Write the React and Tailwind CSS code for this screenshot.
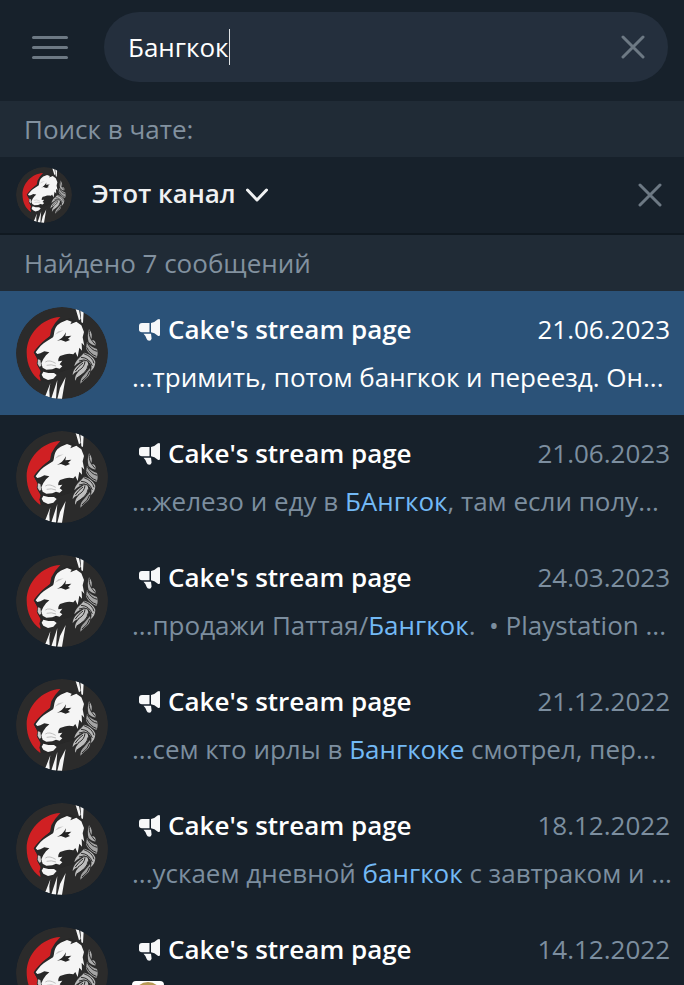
import React from "react";

const messages = [
  { date: "21.06.2023", before: "...тримить, потом бангкок и переезд. Он...", selected: true },
  { date: "21.06.2023", before: "...железо и еду в ", match: "БАнгкок", after: ", там если полу..." },
  { date: "24.03.2023", before: "...продажи Паттая/", match: "Бангкок", after: ".  • Playstation ..." },
  { date: "21.12.2022", before: "...сем кто ирлы в ", match: "Бангкоке", after: " смотрел, пер..." },
  { date: "18.12.2022", before: "...ускаем дневной ", match: "бангкок", after: " с завтраком и ..." },
  { date: "14.12.2022", emoji: true },
];

function LionAvatar({ className }) {
  return (
    <svg viewBox="18 21 276 276" className={`shrink-0 rounded-full ${className}`} aria-hidden="true">
      <circle cx="156" cy="159" r="138" fill="#2b2b2b" />
      <path d="M151 51C96 54 50 103 50 157C50 194 65 226 91 243L92 212L82 196L84 182L73 158L98 128L120 108L124 88L136 68Z" fill="#d02023" />
      <path d="M141 66C130 76 126 91 125 105L107 118C93 129 80 143 71 157L76 166L84 177L80 190L87 203L92 214L88 227L94 243L122 244L145 218L190 205L216 130L219 75L180 54Z" fill="#282828" />
      <path d="M77 157C86 143 98 131 110 124L129 112C134 104 130 90 142 76L152 68L171 60L185 65L181 73L199 65L214 76L222 96L218 112L223 137L215 128L216 152L208 143L203 171L196 156L190 163C176 158 164 163 150 168C146 173 144 178 145 184L157 182L149 193L157 199L149 206L138 203L127 208L109 209L98 203L94 190L100 177L108 166L118 157L103 154L91 160L82 162Z" fill="#f5f5f5" />
      <path d="M141 122C152 119 161 110 168 97L166 109L184 107L174 116L180 120L167 125L153 120Z" fill="#242424" />
      <path d="M134 104L145 94L161 91L147 98Z" fill="#c9c9c9" />
      <path d="M106 186Q118 178 137 190M110 196Q124 192 138 198" fill="none" stroke="#b5b5b5" strokeWidth="2.500" />
      <path d="M100 215L115 219L132 219L140 225L130 236L114 240L100 233L95 224Z" fill="#f5f5f5" />
      <path d="M84 178L91 180L94 198L88 200L83 191Z" fill="#c9c9c9" />
      <path d="M197 27L207 29L212 57L207 61ZM211 29L221 34L219 69L214 67Z" fill="#f5f5f5" />
      <path d="M121 250L118 271L119 292L106 288ZM142 240L138 296L124 295ZM167 231L156 296L142 296L150 264Z" fill="#f5f5f5" />
      <path d="M237 88C246 98 248 110 243 120C254 118 258 126 257 136C248 137 242 132 236 126C232 113 233 101 237 88Z" fill="#adadad" />
      <path d="M231 125C238 137 251 143 261 147C264 157 264 166 259 174C247 169 232 158 228 145Z" fill="#a3a3a3" />
      <path d="M223 158C239 163 253 173 256 186C256 198 250 208 242 214C249 198 241 185 226 181C215 181 202 190 193 199C195 182 211 171 223 158Z" fill="#b8b8b8" />
      <path d="M229 180C239 191 235 206 224 217C212 226 201 232 195 242C194 229 200 220 207 213C198 214 192 219 188 226C188 207 207 190 229 180Z" fill="#bdbdbd" />
      <path d="M240 204C243 219 238 229 226 237C220 242 215 247 211 251C210 240 215 231 223 224Z" fill="#9c9c9c" />
      <path d="M238 91C236 108 243 120 256 134M232 128Q243 151 262 154M230 142Q240 163 259 169M222 161Q247 170 252 190M213 172Q238 173 247 198M207 183Q222 176 236 184M225 184Q224 202 204 213M219 189Q207 197 196 213M234 196Q232 217 199 235M239 213Q235 230 216 243" fill="none" stroke="#2b2b2b" strokeWidth="3" />
    </svg>
  );
}

function CloseIcon() {
  return (
    <svg width="24" height="24" viewBox="0 0 24 24" fill="none" stroke="#6d7984" strokeWidth="3" strokeLinecap="round" aria-hidden="true">
      <path d="M2 2L22 22M22 2L2 22" />
    </svg>
  );
}

function ChannelIcon() {
  return (
    <svg width="24" height="24" viewBox="0 0 24 24" fill="#f7f8f9" className="shrink-0" aria-hidden="true">
      <path d="M4 6H11.500V15.200H4Q1 15.200 1 12.500V9Q1 6 4 6Z" />
      <path d="M13 6Q16.500 5.700 19.500 2.600Q22 1.300 22 3.500V17.500Q22 20 19.500 18.600Q16.500 15.500 13 15.200Z" />
      <path d="M5.500 16.700H13L13.600 21.500Q13.300 23.800 11.200 23.800Q9.300 23.800 8.700 22Q8.300 19.300 5.500 16.700Z" />
    </svg>
  );
}

function EmojiTile() {
  return (
    <svg width="32" height="32" viewBox="0 0 32 32" aria-hidden="true">
      <rect width="32" height="32" rx="4" fill="#fff" />
      <circle cx="16" cy="15" r="14" fill="#b89a55" />
      <circle cx="16" cy="17" r="11" fill="#e0c57f" />
    </svg>
  );
}

function SectionTitle({ children }) {
  return <h2 className="flex h-14 shrink-0 items-center bg-[#202b36] px-6 text-[#82919f]">{children}</h2>;
}

function MessageRow({ message }) {
  const { date, before, match, after, selected, emoji } = message;
  return (
    <li className="shrink-0">
      <button
        type="button"
        className={`flex h-31 w-full items-start gap-6 pt-4 pr-3 pl-4 text-left ${selected ? "bg-[#2b5278]" : ""}`}
      >
        <LionAvatar className="size-23" />
        <span className="flex min-w-0 flex-1 flex-col gap-2">
          <span className="flex h-11 items-center pr-0.5 pl-1.5">
            <ChannelIcon />
            <span className="flex-1 truncate pl-1.5 font-semibold text-white">Cake's stream page</span>
            <span className={selected ? "text-white" : "text-[#7c8e9f]"}>{date}</span>
          </span>
          <span className={`flex h-9 items-center whitespace-pre ${selected ? "text-white" : "text-[#7c8e9f]"}`}>
            {emoji && <EmojiTile />}
            {before}
            {match && <span className="text-[#73b9f5]">{match}</span>}
            {after}
          </span>
        </span>
      </button>
    </li>
  );
}

export default function App() {
  return (
    <main className="flex h-screen flex-col overflow-hidden bg-[#17212b] font-['Open_Sans','Noto_Sans',sans-serif] text-[26px] leading-9">
      <header className="flex shrink-0 items-center gap-9 pt-3 pr-4 pb-[19px] pl-8">
        <button type="button" aria-label="Меню" className="flex w-9 shrink-0 flex-col gap-[7px]">
          <span className="h-[3px] rounded-full bg-[#6d7984]" />
          <span className="h-[3px] rounded-full bg-[#6d7984]" />
          <span className="h-[3px] rounded-full bg-[#6d7984]" />
        </button>
        <div className="flex h-[70px] flex-1 items-center rounded-full bg-[#242f3d] pr-[23px] pl-6">
          <input
            type="text"
            aria-label="Поиск"
            defaultValue="Бангкок"
            className="field-sizing-content h-10 bg-transparent text-white outline-none"
          />
          <span className="h-9 w-px bg-[#dfe2e5]" />
          <button type="button" aria-label="Очистить" className="ml-auto">
            <CloseIcon />
          </button>
        </div>
      </header>

      <SectionTitle>Поиск в чате:</SectionTitle>
      <div className="flex h-[78px] shrink-0 items-center border-b-2 border-[#101921] pr-[22px] pl-4">
        <LionAvatar className="size-14" />
        <button type="button" className="ml-5 flex items-center gap-2.5 pb-1 font-semibold text-[#f0f1f2]">
          Этот канал
          <svg width="22" height="14" viewBox="0 0 22 14" fill="none" stroke="#f0f1f2" strokeWidth="3" strokeLinecap="round" strokeLinejoin="round" className="mt-1" aria-hidden="true">
            <path d="M1.500 2L11 12L20.500 2" />
          </svg>
        </button>
        <button type="button" aria-label="Закрыть" className="ml-auto">
          <CloseIcon />
        </button>
      </div>

      <SectionTitle>Найдено 7 сообщений</SectionTitle>
      <ul className="flex min-h-0 flex-1 flex-col overflow-hidden">
        {messages.map((message, index) => (
          <MessageRow key={index} message={message} />
        ))}
      </ul>
    </main>
  );
}
